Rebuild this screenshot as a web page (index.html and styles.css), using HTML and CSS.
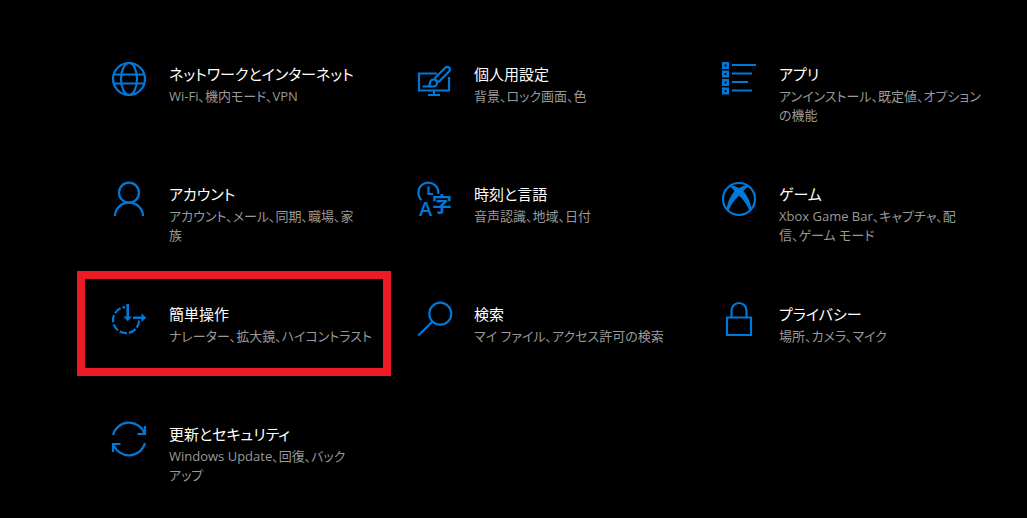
FILE: index.html
```
<!DOCTYPE html>
<html lang="ja">
<head>
    <meta charset="UTF-8">
    <meta name="viewport" content="width=device-width, initial-scale=1.0">
    <title>Windows の設定</title>
    <link rel="stylesheet" href="styles.css">
</head>
<body>
    <main class="settings">
        <a class="item" href="#network">
            <svg class="icon" viewBox="0 0 34 34">
                <circle cx="17" cy="17" r="16"/>
                <ellipse cx="17" cy="17" rx="8" ry="16"/>
                <path d="M2 12.5H32M2 21.5H32"/>
            </svg>
            <div class="text">
                <h2>ネットワークとインターネット</h2>
                <p>Wi-Fi、機内モード、VPN</p>
            </div>
        </a>
        <a class="item" href="#personalization">
            <svg class="icon" viewBox="0 0 34 34">
                <path d="M20 11.5H2V28.5H32V15M17 28.5V33M11 33H23"/>
                <path d="M17.5 16.5L28.2 5.8Q30.3 4 32.2 5.6Q33.8 7.5 32 9.6L21.3 20.3M17.5 16.5L21.3 20.3"/>
                <path d="M5.5 24.5H16.5A3.5 3.5 0 1 0 13 21Q13 24.5 10 24.5"/>
            </svg>
            <div class="text">
                <h2>個人用設定</h2>
                <p>背景、ロック画面、色</p>
            </div>
        </a>
        <a class="item" href="#apps">
            <svg class="icon" viewBox="0 0 34 34">
                <path class="thick" d="M1.3 1.3H5.7V5.7H1.3ZM1.3 9.8H5.7V14.2H1.3ZM1.3 18.3H5.7V22.7H1.3ZM1.3 26.8H5.7V31.2H1.3Z"/>
                <path d="M10 3H34M10 11.5H30M10 20H26M10 28.5H30"/>
            </svg>
            <div class="text">
                <h2>アプリ</h2>
                <p>アンインストール、既定値、オプション<br>の機能</p>
            </div>
        </a>
        <a class="item" href="#accounts">
            <svg class="icon" viewBox="0 0 34 34">
                <circle cx="17" cy="10.7" r="10"/>
                <path d="M3 34A14 13.3 0 0 1 31 34"/>
            </svg>
            <div class="text">
                <h2>アカウント</h2>
                <p>アカウント、メール、同期、職場、家<br>族</p>
            </div>
        </a>
        <a class="item" href="#time">
            <svg class="icon" viewBox="0 0 34 34">
                <path d="M4.5 18A10 10 0 1 1 21.3 12M11.5 4.5V12H16"/>
                <text x="2" y="34">A</text>
                <text x="15" y="30">字</text>
            </svg>
            <div class="text">
                <h2>時刻と言語</h2>
                <p>音声認識、地域、日付</p>
            </div>
        </a>
        <a class="item" href="#gaming">
            <svg class="icon" viewBox="0 0 34 34">
                <circle cx="17" cy="17" r="16"/>
                <path class="solid" d="M7 3.5Q11 2.5 17 6Q23 2.5 27 3.5Q24.5 5.5 21.5 9Q28 17 29.5 27L27.5 29Q24 20 17 13.8Q10 20 6.5 29L4.5 27Q6 17 12.5 9Q9.5 5.5 7 3.5Z"/>
            </svg>
            <div class="text">
                <h2>ゲーム</h2>
                <p>Xbox Game Bar、キャプチャ、配<br>信、ゲーム モード</p>
            </div>
        </a>
        <a class="item selected" href="#ease">
            <svg class="icon" viewBox="0 0 34 34">
                <path stroke-dasharray="7.5 2" d="M27 18.5A13 13 0 1 1 13 5.2"/>
                <path class="thick" d="M15.7 2V16M21 15.7H31"/>
                <path class="solid" d="M11.5 14.5H20L15.7 19.3ZM29.5 11.3L34.3 15.7L29.5 20Z"/>
            </svg>
            <div class="text">
                <h2>簡単操作</h2>
                <p>ナレーター、拡大鏡、ハイコントラスト</p>
            </div>
        </a>
        <a class="item" href="#search">
            <svg class="icon" viewBox="0 0 34 34">
                <circle cx="23.3" cy="11.7" r="11"/>
                <path d="M15.5 19.5L1.3 33.5"/>
            </svg>
            <div class="text">
                <h2>検索</h2>
                <p>マイ ファイル、アクセス許可の検索</p>
            </div>
        </a>
        <a class="item" href="#privacy">
            <svg class="icon" viewBox="0 0 34 34">
                <path d="M5 15.5H29V33H5ZM9.5 15.5V8.5A7.5 7.5 0 0 1 24.5 8.5V15.5"/>
            </svg>
            <div class="text">
                <h2>プライバシー</h2>
                <p>場所、カメラ、マイク</p>
            </div>
        </a>
        <a class="item" href="#update">
            <svg class="icon" viewBox="0 0 34 34">
                <path d="M1 13A16.5 16.5 0 0 1 32.5 11.5M25.5 12H33V4"/>
                <path d="M33 21A16.5 16.5 0 0 1 1.5 22.5M8.5 22H1V30"/>
            </svg>
            <div class="text">
                <h2>更新とセキュリティ</h2>
                <p>Windows Update、回復、バック<br>アップ</p>
            </div>
        </a>
    </main>
</body>
</html>
```

FILE: styles.css
```
body {
    margin: 0;
    background: #000;
    color: #fff;
    font-family: "Open Sans", "Noto Sans CJK JP", sans-serif;
    font-feature-settings: "palt";
}

.settings {
    display: grid;
    grid-template-columns: repeat(3, 1fr);
    grid-auto-rows: minmax(89px, auto);
    gap: 31px 7px;
    padding: 39px 34px 0 85px;
}

.item {
    display: flex;
    gap: 23px;
    padding: 23px 0 0 27px;
    color: inherit;
    text-decoration: none;
}

.selected {
    outline: 8px solid #ed1c24;
}

.icon {
    flex: none;
    width: 34px;
    height: 34px;
    overflow: visible;
    fill: none;
    stroke: #0078d7;
    stroke-width: 2.2;
}

.icon .thick {
    stroke-width: 2.6;
}

.icon .solid {
    fill: #0078d7;
    stroke: none;
}

.icon text {
    fill: #0078d7;
    stroke: none;
    font-size: 20px;
    font-weight: 600;
}

.text {
    padding-top: 2px;
    white-space: nowrap;
}

h2 {
    margin: 0 0 3px;
    font-size: 15px;
    font-weight: 400;
    line-height: 20px;
}

p {
    margin: 0;
    color: #999;
    font-size: 13px;
    line-height: 19px;
}
```
